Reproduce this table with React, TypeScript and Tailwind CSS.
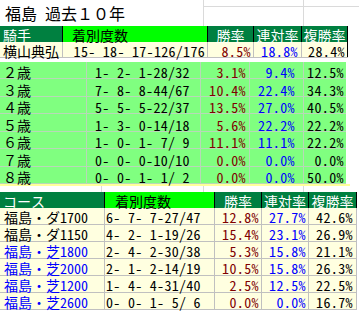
import React from "react";

const ages: [string, string, string, string, string][] = [
  ["２歳", "1- 2- 1-28/32", "3.1%", "9.4%", "12.5%"],
  ["３歳", "7- 8- 8-44/67", "10.4%", "22.4%", "34.3%"],
  ["４歳", "5- 5- 5-22/37", "13.5%", "27.0%", "40.5%"],
  ["５歳", "1- 3- 0-14/18", "5.6%", "22.2%", "22.2%"],
  ["６歳", "1- 0- 1- 7/ 9", "11.1%", "11.1%", "22.2%"],
  ["７歳", "0- 0- 0-10/10", "0.0%", "0.0%", "0.0%"],
  ["８歳", "0- 0- 1- 1/ 2", "0.0%", "0.0%", "50.0%"],
];
const ageH = ["h-[17px]", "h-[18px]", "h-[17px]", "h-[18px]", "h-[17px]", "h-[18px]", "h-[17px]"];

const courses: [string, string, string, string, string, boolean][] = [
  ["福島・ダ1700", "6- 7- 7-27/47", "12.8%", "27.7%", "42.6%", false],
  ["福島・ダ1150", "4- 2- 1-19/26", "15.4%", "23.1%", "26.9%", false],
  ["福島・芝1800", "2- 4- 2-30/38", "5.3%", "15.8%", "21.1%", true],
  ["福島・芝2000", "2- 1- 2-14/19", "10.5%", "15.8%", "26.3%", true],
  ["福島・芝1200", "1- 4- 4-31/40", "2.5%", "12.5%", "22.5%", true],
  ["福島・芝2600", "0- 0- 1- 5/ 6", "0.0%", "0.0%", "16.7%", true],
];

export default function App() {
  return (
    <div className="w-[359px] h-[313px] overflow-hidden bg-white text-[14px] leading-[14px] text-black font-['Noto_Sans_Mono_CJK_JP','Noto_Sans_CJK_JP',monospace]">
      {/* title */}
      <div className="h-[26px] w-[359px] flex">
        <div className="w-[203px] h-[26px] pl-[5px] pt-[5px] text-[16px] leading-[16px]">福島 過去１０年</div>
        <div className="w-[100px] h-[26px] border-l border-[#dadada] flex flex-col">
          <div className="h-[7px] border-b border-[#dadada]" />
        </div>
        <div className="flex-1 h-[26px] border-l border-[#dadada] flex flex-col">
          <div className="h-[7px] border-b border-[#dadada]" />
        </div>
      </div>

      {/* top table */}
      <div className="flex h-[16px] w-[348px]">
        <div className="w-[63px] border-r border-black bg-[#008040] text-white pl-[3px] pt-[2px] flex items-center">騎手</div>
        <div className="w-[145px] border-r border-black bg-[#00ff00] pl-[9px] pt-[2px] flex items-center">着別度数</div>
        <div className="w-[46px] border-r border-black bg-[#008040] text-white pt-[2px] flex items-center justify-center">勝率</div>
        <div className="w-[48px] border-r border-black bg-[#008040] text-white pt-[2px] flex items-center justify-center">連対率</div>
        <div className="w-[46px] border-r border-black bg-[#008040] text-white pt-[2px] flex items-center justify-center">複勝率</div>
      </div>
      <div className="flex h-[16px] w-[348px] bg-[#ffffe0] border-b border-[#c0c0c0]">
        <div className="w-[63px] border-r border-[#c0c0c0] pl-[3px] pt-[2px] flex items-center">横山典弘</div>
        <div className="w-[145px] border-r border-[#c0c0c0] pr-[2px] pt-[2px] flex items-center justify-end whitespace-pre tracking-[0.3px]">15- 18- 17-126/176</div>
        <div className="w-[46px] border-r border-[#c0c0c0] pr-[2px] pt-[2px] flex items-center justify-end text-[#800000] tracking-[0.4px]">8.5%</div>
        <div className="w-[48px] border-r border-[#c0c0c0] pr-[3px] pt-[2px] flex items-center justify-end text-[#0000ff] tracking-[0.4px]">18.8%</div>
        <div className="w-[46px] border-r border-black pr-[2px] pt-[2px] flex items-center justify-end tracking-[0.4px]">28.4%</div>
      </div>
      <div className="h-[4px]" />

      {/* age table */}
      <div className="w-[346px] flex flex-col bg-[#80ff80]">
        {ages.map((r, i) => (
          <div key={i} className={`flex ${ageH[i]} border-b border-[#b8d8b8]`}>
            <div className="w-[87px] border-r border-[#b8d8b8] pl-[3px] pt-[4px] flex items-center">{r[0]}</div>
            <div className="w-[114px] border-r border-[#b8d8b8] pl-[8px] pt-[4px] flex items-center whitespace-pre tracking-[0.3px]">{r[1]}</div>
            <div className="w-[49px] border-r border-[#b8d8b8] pr-[3px] pt-[4px] flex items-center justify-end text-[#800000] tracking-[0.4px]">{r[2]}</div>
            <div className="w-[54px] border-r border-[#b8d8b8] pr-[8px] pt-[4px] flex items-center justify-end text-[#0000ff] tracking-[0.4px]">{r[3]}</div>
            <div className="w-[42px] pr-[2px] pt-[4px] flex items-center justify-end tracking-[0.4px]">{r[4]}</div>
          </div>
        ))}
      </div>
      <div className="h-[2px] w-[350px] bg-[#ffff99]" />
      <div className="h-[6px] w-[359px] flex">
        <div className="w-[101px]" />
        <div className="w-[102px] border-l border-[#dadada]" />
        <div className="w-[100px] border-l border-[#dadada]" />
        <div className="flex-1 border-l border-[#dadada]" />
      </div>

      {/* course table */}
      <div className="flex h-[16px] w-[357px]">
        <div className="w-[105px] border-r border-black bg-[#008040] text-white pl-[3px] pt-[2px] flex items-center">コース</div>
        <div className="w-[110px] border-r border-black bg-[#00ff00] pl-[10px] pt-[2px] flex items-center">着別度数</div>
        <div className="w-[47px] border-r border-black bg-[#008040] text-white pt-[2px] flex items-center justify-center">勝率</div>
        <div className="w-[47px] border-r border-black bg-[#008040] text-white pt-[2px] flex items-center justify-center">連対率</div>
        <div className="w-[48px] border-r border-black bg-[#008040] text-white pt-[2px] flex items-center justify-center">複勝率</div>
      </div>
      {courses.map((r, i) => (
        <div key={i} className="flex h-[17px] w-[357px] bg-[#ffffe0] border-b border-[#c0c0c0]">
          <div className={`w-[105px] border-r border-[#c0c0c0] pl-[4px] pt-[2px] flex items-center ${r[5] ? "text-[#0000ff]" : "text-black"}`}>{r[0]}</div>
          <div className="w-[110px] border-r border-[#c0c0c0] pl-[1px] pt-[2px] flex items-center whitespace-pre tracking-[0.3px]">{r[1]}</div>
          <div className="w-[47px] border-r border-[#c0c0c0] pr-[2px] pt-[2px] flex items-center justify-end text-[#800000] tracking-[0.4px]">{r[2]}</div>
          <div className="w-[47px] border-r border-[#c0c0c0] pr-[2px] pt-[2px] flex items-center justify-end text-[#0000ff] tracking-[0.4px]">{r[3]}</div>
          <div className="w-[48px] border-r border-[#c0c0c0] pr-[3px] pt-[2px] flex items-center justify-end tracking-[0.4px]">{r[4]}</div>
        </div>
      ))}
    </div>
  );
}
